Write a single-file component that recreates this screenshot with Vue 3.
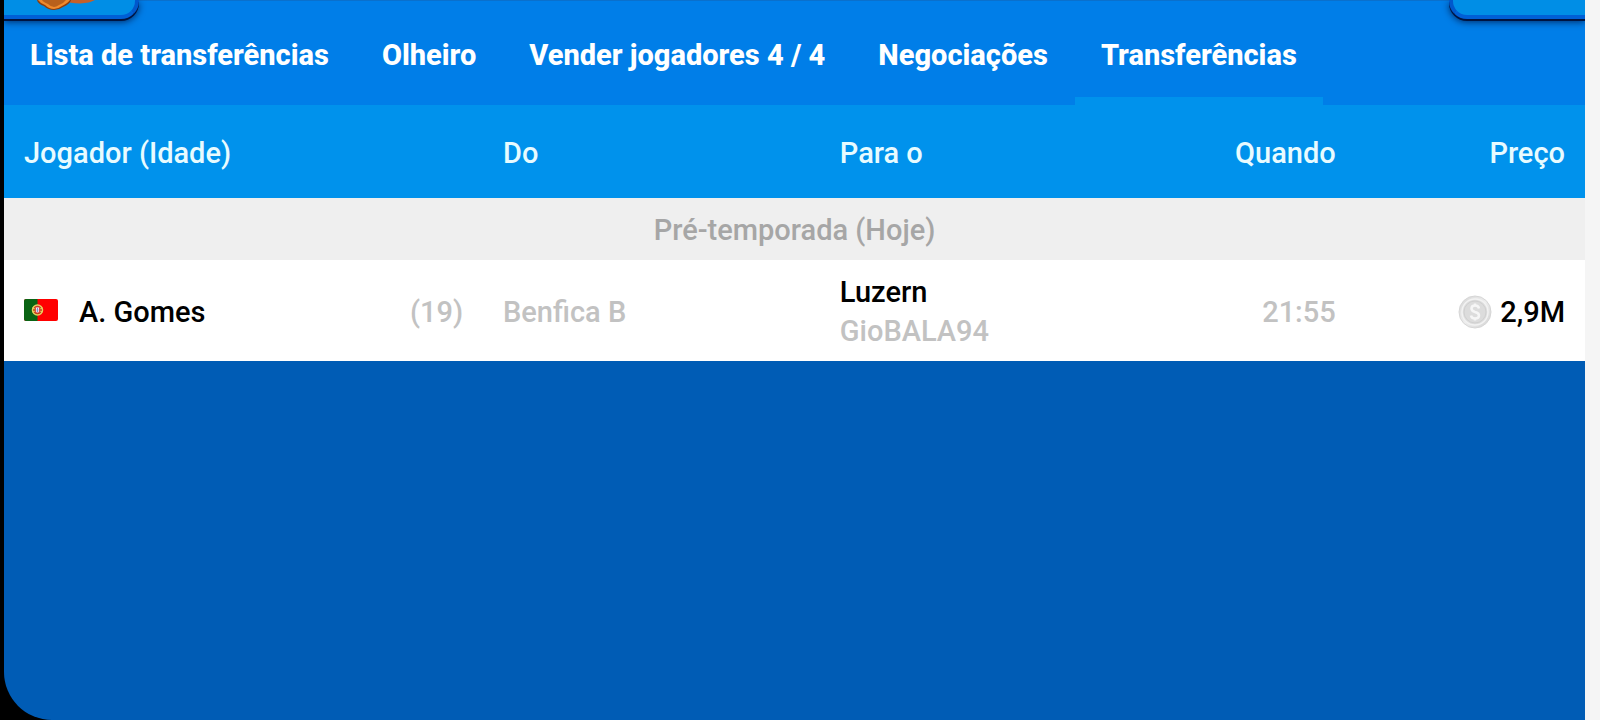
<script setup>
const tabs = ['Lista de transferências', 'Olheiro', 'Vender jogadores 4 / 4', 'Negociações', 'Transferências']
const active = 'Transferências'
const transfers = [
  { name: 'A. Gomes', age: 19, from: 'Benfica B', to: 'Luzern', manager: 'GioBALA94', when: '21:55', price: '2,9M' },
]
</script>

<template>
  <div class="screen">
    <main class="panel">
      <div class="corner corner-left">
        <svg class="badge" width="64" height="12" viewBox="0 0 64 12" aria-hidden="true">
          <path d="M29 0H61Q56 3 46 3.5Q36 3.5 29 0Z" fill="#c4602a" />
          <path d="M3 0H37Q36 4 29 7Q25 10 20 10Q14 10 10 6Q4 4 3 0Z" fill="#8a3c10" />
          <path d="M4 0H36Q34 3 28 6Q24 9 20 9Q15 9 11 5Q6 3 4 0Z" fill="#f08a2c" />
          <path d="M8 0H32Q30 3 25 5Q22 7 20 7Q17 7 14 4Q9 2 8 0Z" fill="#b8601c" />
        </svg>
      </div>
      <div class="corner corner-right"></div>

      <nav class="tabs">
        <button v-for="tab in tabs" :key="tab" type="button" class="tab" :class="{ active: tab === active }">{{ tab }}</button>
      </nav>

      <table class="transfers">
        <colgroup>
          <col class="c-player"><col class="c-club"><col class="c-club"><col class="c-when"><col class="c-price">
        </colgroup>
        <thead>
          <tr>
            <th scope="col">Jogador (Idade)</th>
            <th scope="col">Do</th>
            <th scope="col">Para o</th>
            <th scope="col" class="end">Quando</th>
            <th scope="col" class="end">Preço</th>
          </tr>
        </thead>
        <tbody>
          <tr class="season"><td colspan="5">Pré-temporada (Hoje)</td></tr>
          <tr v-for="t in transfers" :key="t.name" class="row">
            <td>
              <div class="player">
                <svg class="flag" width="34" height="26" viewBox="0 0 34 26" role="img" aria-label="Portugal">
                  <rect width="34" height="22" rx="2" fill="#f00" />
                  <path d="M2 0H13.5V22H2Q0 22 0 20V2Q0 0 2 0Z" fill="#0a6414" />
                  <circle cx="13.5" cy="11" r="5" fill="#b53a10" stroke="#e8d060" stroke-width="1.5" />
                  <path d="M8.5 9L18.5 13M8.5 13L18.5 9" stroke="#e8d060" />
                  <path d="M11 7.5H16V12Q16 14.5 13.5 14.5Q11 14.5 11 12Z" fill="#e04848" />
                  <path d="M12 8.5H15V12Q15 13.5 13.5 13.5Q12 13.5 12 12Z" fill="#f4f0f4" />
                  <path d="M13.5 9V13M12.5 11H14.5" stroke="#8090c8" />
                </svg>
                <span>{{ t.name }}</span>
                <span class="age">({{ t.age }})</span>
              </div>
            </td>
            <td class="muted">{{ t.from }}</td>
            <td><div>{{ t.to }}</div><div class="muted">{{ t.manager }}</div></td>
            <td class="end muted">{{ t.when }}</td>
            <td>
              <div class="price">
                <svg width="34" height="34" viewBox="0 0 34 34" aria-hidden="true">
                  <defs>
                    <linearGradient id="rim" x1="0" y1="0" x2="1" y2="1">
                      <stop offset="0" stop-color="#d6d6d6" /><stop offset=".5" stop-color="#ededed" /><stop offset="1" stop-color="#d2d2d2" />
                    </linearGradient>
                  </defs>
                  <circle cx="17" cy="17" r="16" fill="url(#rim)" stroke="#d6d6d6" />
                  <circle cx="17" cy="17" r="13" fill="#dedede" stroke="#f2f2f2" stroke-width="1.5" />
                  <circle cx="17" cy="17" r="11" fill="#dcdcdc" stroke="#d0d0d0" />
                  <path d="M21 13.5Q20.5 10.5 17 10.5Q13.5 10.5 13.5 13.5Q13.5 16 17 17Q21 18 21 20.5Q21 23.5 17 23.5Q13.5 23.5 13 20.5M17 8.5V11M17 23V25.5" fill="none" stroke="#f6f6f6" stroke-width="2.5" />
                </svg>
                <span>{{ t.price }}</span>
              </div>
            </td>
          </tr>
        </tbody>
      </table>
    </main>
  </div>
</template>

<style>
body { margin: 0; background: #f5f5f5; }
</style>

<style scoped>
.screen {
  box-sizing: border-box;
  min-height: 100vh;
  display: flex;
  margin-right: 15px;
  padding-left: 4px;
  background: #000;
  font-family: Roboto, "Liberation Sans", sans-serif;
  font-size: 29px;
  font-weight: 500;
  line-height: 39px;
  color: #000;
}
.panel {
  position: relative;
  flex: 1;
  min-width: 0;
  overflow: hidden;
  background: #005cb5;
  border-bottom-left-radius: 48px;
}
.corner {
  position: absolute;
  top: 0;
  height: 15px;
  background: #008ee6;
  border-bottom: 4px solid #005fd6;
  box-shadow: 0 2px 0 #001440, 0 3px 7px #002c68;
}
.corner-left {
  left: 0;
  width: 131px;
  border-right: 4px solid #0058cc;
  border-bottom-right-radius: 18px;
}
.corner-right {
  right: 0;
  width: 132px;
  border-left: 4px solid #0058cc;
  border-bottom-left-radius: 18px;
}
.badge {
  display: block;
  margin-left: 30px;
}
.tabs {
  display: flex;
  gap: 1px;
  background: #007ee8;
  border-top: 1px solid #0a70cc;
}
.tab {
  box-sizing: border-box;
  height: 104px;
  padding: 12px 26px 0;
  border: 0;
  border-bottom: 8px solid transparent;
  background: none;
  color: #fff;
  font: inherit;
  font-weight: 800;
  white-space: nowrap;
}
.tab.active { border-bottom-color: #0092ec; }
.transfers {
  width: 100%;
  table-layout: fixed;
  border-collapse: collapse;
}
.c-player { width: 30.3%; }
.c-club { width: 21.3%; }
.c-when { width: 12.6%; }
.c-price { width: 14.5%; }
th, td {
  padding: 3px 20px 0;
  text-align: left;
  font-weight: 500;
}
th {
  height: 90px;
  background: #0092ec;
  color: #e8fbff;
}
.end { text-align: right; }
.season td {
  height: 59px;
  background: #efefef;
  color: #a6a6a6;
  text-align: center;
}
.row td {
  height: 98px;
  background: #fff;
}
.row .muted, .age { color: #c2c2c2; }
.player {
  display: flex;
  align-items: center;
  gap: 21px;
}
.age { margin-left: auto; }
.price {
  display: flex;
  align-items: center;
  justify-content: flex-end;
  gap: 8px;
}
</style>
